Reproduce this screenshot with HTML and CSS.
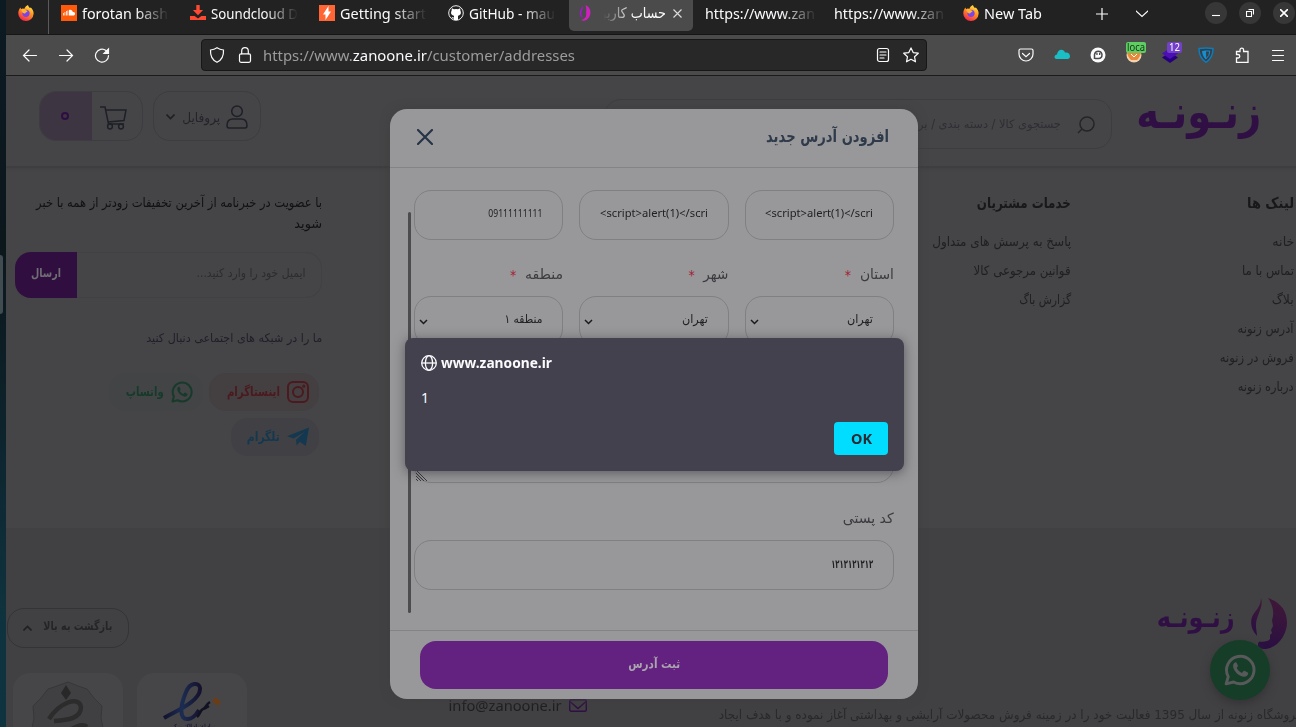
FILE: index.html
```html
<!DOCTYPE html>
<html lang="fa">
<head>
<meta charset="utf-8">
<title>حساب کاربری</title>
<link rel="stylesheet" href="styles.css">
</head>
<body>
<svg class="defs" width="0" height="0">
  <defs>
    <linearGradient id="fx" x1="0.8" y1="0" x2="0.3" y2="1"><stop offset="0" stop-color="#fff04a"/><stop offset=".45" stop-color="#ff9320"/><stop offset="1" stop-color="#f5224f"/></linearGradient>
    <linearGradient id="face" x1="0.6" y1="0" x2="0.4" y2="1"><stop offset="0" stop-color="#3f1838"/><stop offset="1" stop-color="#2a0f42"/></linearGradient>
    <linearGradient id="seal" x1="0" y1="0" x2="1" y2="0"><stop offset="0" stop-color="#12122e"/><stop offset=".5" stop-color="#1c2c52"/><stop offset="1" stop-color="#15122e"/></linearGradient>
    <symbol id="firefox" viewBox="0 0 16 16"><path fill="url(#fx)" d="M10 0c.3 1.800 1.200 2.200 2 3l.8-.6c1.800 1.700 3 4 2.800 6.400A7.600 7.600 0 0 1 8 16 7.600 7.600 0 0 1 .3 8.200C.3 5.800 1.300 3.600 2.600 2.400c0 .8.3 1.400.7 1.800.9-.4 2-.5 2.900-.2C7 2.200 8.200.8 10 0z"/><circle cx="8" cy="8.300" r="3.600" fill="#7a45e8"/><path fill="#ffb22e" d="M3.300 4.200c1.700-.7 3.300-.3 4.700 1 .9.600 1.700.4 1.500 1.100-.3 1-2 .8-2.300 2.200C5.500 8.800 3.300 7 3.300 4.200z"/></symbol>
    <symbol id="whatsapp" viewBox="0 0 24 24"><path fill="none" stroke="currentColor" stroke-width="2.200" stroke-linejoin="round" d="M1.600 22.400 3.200 17A10.300 10.300 0 1 1 7.200 21z"/><path fill="currentColor" d="M8.300 6.300c.5-.2 1-.1 1.200.4l.9 2c.1.400 0 .7-.9 1.800.9 1.700 2.200 2.900 4 3.700l1.200-1.400c.3-.3.6-.3.9-.1l2.200 1.100c.4.200.4.500.3 1-.3 1.400-1.500 2.300-3 2.300-3.600-.2-8-4.200-8.300-8-.1-1.300.7-2.500 1.500-2.800z"/></symbol>
  </defs>
</svg>
<div class="screen">
  <div class="desk"><i class="dock"></i></div>
  <div class="window">
    <div class="tabs">
      <div class="pinned"><svg width="16" height="16"><use href="#firefox"/></svg></div>
      <div class="tab"><svg width="16" height="16" viewBox="0 0 16 16"><rect width="16" height="16" fill="#ff5a0a"/><path fill="#fff" d="M2 8h.8v2.500H2zM3.500 7h.8v3.500h-.8zM5 6h.8v4.500H5zM6.500 5.500h.8v5h-.8zM8 5c2-.8 3.600.4 3.800 2 1.300-.3 2.300.5 2.300 1.700s-.9 1.800-1.800 1.800H8z"/></svg><span class="tl"><b class="fit" data-w="86">forotan bash</b></span></div>
      <div class="tab"><svg width="16" height="16" viewBox="0 0 16 16"><path fill="#ff4a33" d="M6.300 0h3.400v5h3.400L8 10.300 2.900 5h3.400zM0 11h4.600L8 13.500 11.400 11H16v4H0z"/></svg><span class="tl"><b class="fit" data-w="87">Soundcloud D</b></span></div>
      <div class="tab"><svg width="16" height="16" viewBox="0 0 16 16"><rect width="16" height="16" fill="#ff6633"/><path fill="#fff" d="M9.500 1v5.500H12L6.500 15v-5.500H4z"/></svg><span class="tl"><b class="fit" data-w="86">Getting start</b></span></div>
      <div class="tab"><svg width="16" height="16" viewBox="0 0 16 16"><circle cx="8" cy="8" r="7.300" fill="#222" stroke="#eee"/><path fill="#fff" d="M3.800 3.300 6 4.200q2-.4 4 0l2.200-.9.200 2.500c1.200 2 .3 4.700-2.400 5V15H6v-1.600c-1.500.2-2-.8-2.500-1.500 1 0 1.500.8 2.500.6v-1.700C3.300 10.500 2.400 7.800 3.600 5.800z"/></svg><span class="tl"><b class="fit" data-w="86">GitHub - mau</b></span></div>
      <div class="tab active"><svg width="13" height="16" viewBox="0 0 13 16"><path fill="#d020c0" d="M6.500 0C12 2 13.500 10 8 14.500 6 16 3.500 16 2 15c4-1 5.500-3 5.200-6C7 6 8 4 6.500 0z"/><path fill="#a018c8" d="M4 1c.5 3-2 5-1.500 9L4 13C0 12-.8 6 4 1z"/></svg><span class="tl fa"><b class="fit" data-w="66">حساب کاربر</b></span><svg class="x" width="9" height="9" viewBox="0 0 9 9"><path d="m.5.5 8 8m0-8-8 8"/></svg></div>
      <div class="tab"><span class="tl wide"><b class="fit" data-w="110">https://www.zan</b></span></div>
      <div class="tab"><span class="tl wide"><b class="fit" data-w="110">https://www.zan</b></span></div>
      <div class="tab last"><svg width="16" height="16"><use href="#firefox"/></svg><b class="fit" data-w="58">New Tab</b></div>
      <div class="tabend">
        <svg class="ln" width="12" height="12" viewBox="0 0 12 12"><path d="M6 0v12M0 6h12"/></svg>
        <svg class="ln" width="12" height="8" viewBox="0 0 12 8"><path d="m0 1 6 5.500L12 1"/></svg>
      </div>
      <div class="wbtns">
        <i><svg width="8" height="8" viewBox="0 0 8 8"><path d="M0 6.500h8"/></svg></i>
        <i><svg width="8" height="8" viewBox="0 0 8 8"><path d="M.5 2.500h5v5h-5zM2.500.5h5v5"/></svg></i>
        <i><svg width="8" height="8" viewBox="0 0 8 8"><path stroke-width="1.600" d="m0 0 8 8m0-8-8 8"/></svg></i>
      </div>
    </div>
    <div class="toolbar">
      <svg class="ln" width="16" height="16" viewBox="0 0 16 16"><path d="M14.500 8.500h-13m5.500-5.500L1.500 8.500 7 14"/></svg>
      <svg class="ln" width="16" height="16" viewBox="0 0 16 16"><path d="M1.500 8.500h13M9 3l5.500 5.500L9 14"/></svg>
      <svg class="ln" width="16" height="16" viewBox="0 0 16 16"><path d="M14.500 8.500A6.500 6.500 0 1 1 12 3.500l2 2"/><path fill="#fbfbfe" d="M14.500 2v4.500H10z"/></svg>
      <div class="urlbar">
        <svg class="ln" width="16" height="16" viewBox="0 0 16 16"><path d="M8 .8c2 1.400 4 2 6.500 2.200C14.800 8.500 13 13 8 15.300 3 13 1.200 8.500 1.500 3 4 2.800 6 2.200 8 .8z"/></svg>
        <svg class="ln" width="16" height="16" viewBox="0 0 16 16"><rect x="2.500" y="6.800" width="11" height="8.500" rx="1.500"/><path d="M4.700 6.800V4a3.300 3.300 0 0 1 6.600 0v2.800"/></svg>
        <span class="url"><b class="fit" data-w="312">https://www.<em>zanoone.ir</em>/customer/addresses</b></span>
        <svg class="ln" width="16" height="16" viewBox="0 0 16 16"><rect x="2.500" y="1.500" width="11" height="13" rx="2"/><path d="M5 5h6M5 8h6M5 11h4"/></svg>
        <svg class="ln" width="16" height="16" viewBox="0 0 16 16"><path stroke-linejoin="round" d="m8 .9 2.200 4.700 5.100.6-3.800 3.500 1 5.100L8 12.300l-4.500 2.500 1-5.100L.7 6.200l5.100-.6z"/></svg>
      </div>
      <div class="exts">
        <svg class="ln" width="16" height="16" viewBox="0 0 16 16"><path d="M2.500 2h11Q15 2 15 3.500V7A7 7 0 0 1 1 7V3.500Q1 2 2.500 2zM4.500 6.500 8 9.700l3.500-3.200"/></svg>
        <svg width="16" height="16" viewBox="0 0 16 16"><path fill="#19bfc5" d="M2.500 12C-.5 11.500 0 8 3 7.500 3.500 2 9.500 1 11 5.500c3.500-.5 5 1.500 5 3.800 0 1.700-1 2.700-2.500 2.700z"/></svg>
        <svg width="16" height="16" viewBox="0 0 16 16"><circle cx="8" cy="8" r="7.500" fill="#fbfbfe"/><path fill="none" stroke="#4a4a4a" stroke-width="1.500" d="M4.500 12V7.500a3.800 3.800 0 0 1 7.500 0c0 2.500-1 4-3.500 4H5"/><path fill="#4a4a4a" d="M6.300 6h1.300v2H6.300zM9 6h1.300v2H9z"/></svg>
        <span class="badged"><svg width="16" height="16" viewBox="0 0 16 16"><circle cx="8" cy="8" r="7.500" fill="#f1d3b0"/><path fill="#e8893a" d="M1 6h14c-1 3-2 5-4 7H5C3 11 2 9 1 6z"/><path stroke="#fff" d="m5 7 3 3 3-3" fill="none"/></svg><i class="g"><b class="fit" data-w="18">loca</b></i></span>
        <span class="badged"><svg width="16" height="16" viewBox="0 0 16 16"><path fill="#25007a" d="m8 5 8 5.500L8 16l-8-5.500z"/><path fill="#4b0fb5" d="m8 1 8 5.500L8 12 0 6.500z"/></svg><i class="p"><b class="fit" data-w="11">12</b></i></span>
        <svg width="16" height="16" viewBox="0 0 16 16"><path fill="#343f49" stroke="#0b7dbb" stroke-width="1.500" d="M1 1.500q7-1 14 0Q15 11 8 15.300 1 11 1 1.500z"/><path fill="#1590d4" d="M7.800 3.500v9Q4.500 9.500 4 4z"/><path fill="none" stroke="#1590d4" d="M7.500 4h4.300q0 5-4 8z"/></svg>
        <svg class="ln" width="16" height="16" viewBox="0 0 16 16"><path stroke-width="1.300" d="M2.500 15.300V11H4a1.500 1.500 0 0 0 0-3.500H2.500v-3H6V3a1.800 1.800 0 0 1 3.600 0v1.500h4.400v10.800z"/></svg>
        <svg class="ln" width="16" height="16" viewBox="0 0 16 16"><path d="M2.500 3.500h11M2.500 8.500h11M2.500 13.500h11"/></svg>
      </div>
    </div>

    <div class="page" dir="rtl">
      <header class="top">
        <div class="brand"><b class="fit" data-w="125">زنـونـه</b></div>
        <div class="search"><svg width="18" height="18" viewBox="0 0 18 18"><circle cx="10" cy="8" r="7"/><path d="m5 13-4 4"/></svg><b class="fit" data-w="152">جستجوی کالا / دسته بندی / برند</b></div>
        <div class="profile"><svg width="22" height="24" viewBox="0 0 22 24"><circle cx="11" cy="6.300" r="5.300"/><path d="M1 20.500c0-4.500 2-6.500 6-6.500h8c4 0 6 2 6 6.500 0 1.500-.5 2.500-2 2.500H3c-1.500 0-2-1-2-2.500z"/></svg><b class="fit" data-w="38">پروفایل</b><svg class="chev" width="9" height="6" viewBox="0 0 9 6"><path d="m.5.5 4 4 4-4"/></svg></div>
        <div class="cart"><div><svg width="27" height="24" viewBox="0 0 27 24"><path d="M0 1h5l3.500 17H24M6 4h20l-2 10.500L8 16"/><circle cx="10" cy="20.500" r="2.400"/><circle cx="21" cy="20.500" r="2.400"/></svg></div><span><u></u></span></div>
      </header>

      <section class="links">
        <nav class="c1"><h4><b class="fit" data-w="47">لینک ها</b></h4>
          <a><b class="fit" data-w="22">خانه</b></a><a><b class="fit" data-w="52">تماس با ما</b></a><a><b class="fit" data-w="22">بلاگ</b></a><a><b class="fit" data-w="56">آدرس زنونه</b></a><a><b class="fit" data-w="74">فروش در زنونه</b></a><a><b class="fit" data-w="56">درباره زنونه</b></a></nav>
        <nav class="c2"><h4><b class="fit" data-w="94">خدمات مشتریان</b></h4>
          <a><b class="fit" data-w="139">پاسخ به پرسش های متداول</b></a><a><b class="fit" data-w="97">قوانین مرجوعی کالا</b></a><a><b class="fit" data-w="52">گزارش باگ</b></a></nav>
        <div class="news">
          <p><b class="fit" data-w="286">با عضویت در خبرنامه از آخرین تخفیفات زودتر از همه با خبر</b></p>
          <p><b class="fit" data-w="28">شوید</b></p>
          <div class="mail"><span><b class="fit" data-w="109">ایمیل خود را وارد کنید...</b></span><button><b class="fit" data-w="30">ارسال</b></button></div>
          <p class="follow"><b class="fit" data-w="176">ما را در شبکه های اجتماعی دنبال کنید</b></p>
          <div class="social">
            <a class="ig"><svg width="22" height="22" viewBox="0 0 22 22" fill="none" stroke="currentColor" stroke-width="2"><rect x="1" y="1" width="20" height="20" rx="5"/><circle cx="11" cy="11" r="5"/><circle cx="16.800" cy="5.200" r=".6"/></svg><b class="fit" data-w="53">اینستاگرام</b></a>
            <a class="wa"><svg width="22" height="22"><use href="#whatsapp"/></svg><b class="fit" data-w="38">واتساپ</b></a>
            <a class="tg"><svg width="22" height="20" viewBox="0 0 22 20"><path fill="currentColor" d="M22 .5 18.800 19l-6-4.200-3.200 3.700-.5-5.800L17.500 5 6.500 11.500 0 9.300z"/></svg><b class="fit" data-w="33">تلگرام</b></a>
          </div>
        </div>
      </section>

      <footer class="foot">
        <div class="row">
          <div class="flogo"><svg width="36" height="51" viewBox="0 0 36 51"><path fill="url(#face)" d="M17 0c14 5 19 14 19 25S27 51 13 51c-3 0-6-2-6-3.500 0-2 0-3 1.500-4 4 .5 9 0 10.500-2.500v-4l2-2-1-3 2-4-1-6c3-8 0-16-4-22z"/><path fill="url(#face)" d="M10 0c3 10-5 17-5 27 0 5 1 7 1 11-8-9-7-18-2-24 4-5 6-9 6-14z"/></svg><b class="fit" data-w="78">زنـونـه</b></div>
          <div class="totop"><b class="fit" data-w="69">بازگشت به بالا</b><svg width="9" height="6" viewBox="0 0 9 6"><path d="m.5 5.500 4-4 4 4"/></svg></div>
        </div>
        <div class="row2">
          <p><b class="fit" data-w="583">فروشگاه زنونه از سال 1395 فعالیت خود را در زمینه فروش محصولات آرایشی و بهداشتی آغاز نموده و با هدف ایجاد</b></p>
          <div class="email"><svg width="18" height="13" viewBox="0 0 18 13"><rect x=".7" y=".7" width="16.600" height="11.600" rx="1.500"/><path d="m1 2.500 8 7 8-7"/></svg><b class="fit" data-w="113" dir="ltr">info@zanoone.ir</b></div>
          <div class="seals">
            <div class="seal"><svg width="58" height="42" viewBox="0 0 58 42"><path fill="none" stroke="url(#seal)" stroke-width="4" d="M1 37C13 30 38 20 37 7c-1-6-10-6-14 4-6 14-7 28 2 27 5 0 8-4 11-9"/><path stroke="#111122" stroke-width="2.500" fill="none" d="M34 36c3-2 3-7 6-8s2-4 7-7M41 28l5-3"/><path fill="#6b3c18" d="m49 20 4-4 5 5-3 4z"/></svg><b class="fit" data-w="45">نماد اعتماد الکترونیکی</b></div>
            <div class="seal"><svg width="76" height="60" viewBox="0 0 76 60"><path fill="#404042" stroke="#373738" d="m38 1 10 4 9 3 7 9 8 8-1 12 2 10-7 9H9L2 47l2-10-1-12 8-8 7-9 9-3z"/><path fill="#282829" d="m36 4 5 8-5 7-5-7z"/><path fill="none" stroke="#2c2c2d" stroke-width="4.500" d="M19 38c10-16 30-24 32-12 0 12-14 13-27 14M28 56c8-4 22-16 29-10"/></svg></div>
          </div>
        </div>
      </footer>

      <div class="chat"><svg width="32" height="32"><use href="#whatsapp"/></svg></div>

      <div class="modal">
        <div class="mhead"><b class="fit" data-w="123">افزودن آدرس جدید</b><svg width="16" height="16" viewBox="0 0 16 16"><path d="m1 1 14 14m0-14L1 15"/></svg></div>
        <div class="mbody">
          <div class="grid">
            <div class="inp lat"><b class="fit" data-w="108" dir="ltr">&lt;script&gt;alert(1)&lt;/scri</b></div><div class="inp lat"><b class="fit" data-w="108" dir="ltr">&lt;script&gt;alert(1)&lt;/scri</b></div><div class="inp lat"><b class="fit" data-w="54" dir="ltr">09111111111</b></div>
            <label><b class="fit" data-w="34">استان</b><i>*</i></label><label><b class="fit" data-w="25">شهر</b><i>*</i></label><label><b class="fit" data-w="38">منطقه</b><i>*</i></label>
            <div class="inp sel"><b class="fit" data-w="26">تهران</b><svg width="9" height="6" viewBox="0 0 9 6"><path d="m1 1 3.500 3.500L8 1"/></svg></div><div class="inp sel"><b class="fit" data-w="26">تهران</b><svg width="9" height="6" viewBox="0 0 9 6"><path d="m1 1 3.500 3.500L8 1"/></svg></div><div class="inp sel"><b class="fit" data-w="38">منطقه ۱</b><svg width="9" height="6" viewBox="0 0 9 6"><path d="m1 1 3.500 3.500L8 1"/></svg></div>
          </div>
          <div class="area"><svg width="11" height="11" viewBox="0 0 11 11"><path d="m0 0 11 11M0 3l8 8M0 6l5 5M0 9l2 2"/></svg></div>
          <label class="post"><b class="fit" data-w="51">کد پستی</b></label>
          <div class="inp zip"><b class="fit" data-w="42">۱۲۱۲۱۲۱۲۱۲</b></div>
          <i class="bar"></i>
        </div>
        <div class="mfoot"><button><b class="fit" data-w="52">ثبت آدرس</b></button></div>
      </div>

      <div class="alert" dir="ltr">
        <div class="origin"><svg width="16" height="16" viewBox="0 0 16 16"><circle cx="8" cy="8" r="7.300"/><ellipse cx="8" cy="8" rx="3.600" ry="7.300"/><path d="M.7 8h14.600"/></svg><b class="fit" data-w="111">www.zanoone.ir</b></div>
        <div class="msg">1</div>
        <button><b class="fit" data-w="21">OK</b></button>
      </div>
    </div>
  </div>
</div>
<script src="app.js"></script>
</body>
</html>
```
FILE: styles.css
```css
* { box-sizing: border-box; }
body { margin: 0; font-family: "Noto Sans", "DejaVu Sans", sans-serif; overflow: hidden; }
p, h4 { margin: 0; }
b, em, i { font-weight: inherit; font-style: normal; }
svg { display: block; flex: none; }
.defs { position: absolute; }
button { border: 0; padding: 0; font: inherit; color: inherit; display: flex; align-items: center; justify-content: center; }
.fit { display: inline-block; white-space: nowrap; flex: none; }

.screen { width: 1296px; height: 727px; display: flex; overflow: hidden; }
.desk { width: 6px; flex: none; padding-top: 255px; background: linear-gradient(#0c1a22, #0c171c 35%, #0d242d 60%, #0f333e 85%, #10343f); }
.dock { display: block; width: 3px; height: 59px; border-radius: 0 4px 4px 0; background: #414c51; }
.window { width: 1290px; flex: none; display: flex; flex-direction: column; }

/* tab strip */
.tabs { height: 35px; flex: none; background: #222; border-bottom: 1px solid #161616; display: flex; color: #fbfbfe; font-size: 14.5px; }
.pinned { width: 43px; height: 34px; border-right: 1px solid #5a5a5a; padding: 5px 0 0 12px; margin-right: 4px; flex: none; }
.tab { width: 124px; margin-right: 5px; height: 31px; padding: 0 0 5px 8px; display: flex; align-items: center; gap: 5px; flex: none; }
.tab.last { padding-left: 7px; }
.tab.active { background: #4b4b4b; border-radius: 0 0 5px 5px; padding-left: 10px; gap: 8px; }
.tl { width: 87px; overflow: hidden; -webkit-mask-image: linear-gradient(90deg, #000 62%, transparent); mask-image: linear-gradient(90deg, #000 62%, transparent); }
.tl.wide { width: 112px; margin-left: -1px; flex: none; -webkit-mask-image: linear-gradient(90deg, #000 68%, transparent); mask-image: linear-gradient(90deg, #000 68%, transparent); }
.tl.fa { width: 66px; direction: rtl; font-family: "DejaVu Sans", sans-serif; -webkit-mask-image: linear-gradient(270deg, #000 50%, transparent 95%); mask-image: linear-gradient(270deg, #000 50%, transparent 95%); }
.tab .x { margin-left: -1px; stroke: #ddd; stroke-width: 1.1; }
.ln { fill: none; stroke: #fbfbfe; stroke-width: 1.2; stroke-linecap: round; }
.tabend { width: 92px; height: 27px; margin-left: 11px; display: flex; align-items: center; gap: 28px; flex: none; }
.wbtns { display: flex; gap: 12px; padding-top: 2px; margin-left: auto; margin-right: 1px; }
.wbtns i { width: 22px; height: 22px; border-radius: 50%; background: #373737; display: grid; place-items: center; }
.wbtns svg { fill: none; stroke: #fff; stroke-width: 1.1; }

/* address bar */
.toolbar { height: 41px; flex: none; background: #4b4b4b; border-bottom: 1px solid #1b1b1b; display: flex; align-items: center; gap: 20px; padding-left: 16px; }
.urlbar { width: 726px; height: 32px; margin-left: 71px; flex: none; border: 1px solid #171717; border-radius: 4px; background: #282828; display: flex; align-items: center; gap: 12px; padding: 0 7px; }
.url { flex: 1; color: #9c9c9c; font-size: 15px; line-height: 20px; margin: -1px 0 0 -2px; }
.url em { color: #fbfbfe; }
.exts { display: flex; gap: 20px; margin-left: 71px; }
.badged { position: relative; width: 16px; height: 16px; }
.badged i { position: absolute; top: -5px; height: 11px; border-radius: 2px; padding: 0 1px; font-size: 10px; line-height: 11px; }
.badged .g { left: 0; width: 20px; background: #5fce62; color: #14351a; }
.badged .p { left: 5px; width: 15px; background: #7340c8; color: #fff; padding-left: 2px; }

/* shop page */
.page { position: relative; flex: 1; background: #454547; color: #202024; font: 12.5px "DejaVu Sans Condensed", "DejaVu Sans", sans-serif; overflow: hidden; }
.top { height: 92px; border-bottom: 2px solid #3e3e40; display: flex; align-items: flex-start; padding: 15px 35px 0 0; box-shadow: 0 1px 2px #414143; }
.brand { width: 125px; height: 56px; font-weight: bold; font-size: 46px; line-height: 42px; color: #300f44; flex: none; }
.search { width: 508px; height: 50px; margin: 8px 24px 0 0; border: 1px solid #3d3d41; border-radius: 17px; display: flex; align-items: center; gap: 15px; padding-right: 17px; color: #2e2e34; font-size: 11.5px; }
.search svg { fill: none; stroke: #242429; stroke-width: 1.5; margin: 2px -1px 0 1px; }
.profile { width: 108px; height: 50px; margin-right: 343px; border: 1px solid #3d3d41; border-radius: 17px; display: flex; align-items: center; gap: 6px; padding: 2px 12px 0 0; color: #24242b; flex: none; }
.profile svg, .cart svg { fill: none; stroke: #1e2028; stroke-width: 1.5; }
.profile .chev { margin-right: 1px; }
.cart { width: 104px; height: 50px; margin-right: 10px; border: 1px solid #3d3d41; border-radius: 17px; display: flex; overflow: hidden; flex: none; }
.cart div { width: 50px; display: grid; place-items: center; padding: 3px 0 0 0; }
.cart div svg { margin-right: 8px; }
.cart span { width: 52px; background: #3d3542; display: grid; place-items: center; }
.cart u { width: 8px; height: 8px; border: 2px solid #2e0e42; border-radius: 50%; margin-right: 2px; margin-bottom: 1px; }

.links { height: 360px; display: flex; padding: 24px 2px 0 9px; }
.c1 { width: 223px; flex: none; }
.c2 { width: 749px; flex: none; }
.links h4 { height: 21px; line-height: 23px; font-size: 15px; margin-bottom: 14px; color: #18181b; }
.links a { display: block; height: 29px; line-height: 29px; font-size: 13px; }
.news { width: 307px; flex: none; }
.news p { height: 21px; line-height: 21px; font-size: 13px; color: #111114; }
.mail { width: 307px; height: 46px; margin-top: 18px; box-shadow: inset 0 0 0 1px #414143; border-radius: 16px; display: flex; overflow: hidden; color: #2c2c31; font-size: 12px; }
.mail span { flex: 1; padding-right: 17px; line-height: 43px; }
.mail button { width: 62px; background: #300f40; color: #706e74; font-weight: bold; padding-bottom: 4px; }
.news .follow { margin-top: 30px; color: #1f1f29; font-size: 12px; }
.social { display: flex; flex-wrap: wrap; gap: 7px 6px; padding: 0 3px; margin-top: 24px; font-weight: bold; }
.links .social a { height: 38px; border-radius: 17px; display: flex; align-items: center; padding-right: 10px; gap: 7px; }
.links .social .fit { margin-bottom: 2px; }
.links .social .ig { width: 110px; background: #443f41; color: #4b191e; }
.links .social .wa { width: 94px; background: #424446; color: #173a2b; }
.links .social .tg { width: 88px; background: #414145; color: #14384f; }

.foot { height: 200px; background: #414143; color: #252528; }
.row { display: flex; justify-content: space-between; padding: 70px 9px 0 1px; height: 145px; }
.flogo { display: flex; gap: 16px; font-weight: bold; font-size: 29px; line-height: 38px; color: #300f44; }
.totop { width: 122px; height: 40px; margin-top: 10px; border: 1px solid #343436; border-radius: 17px; display: flex; align-items: center; gap: 11px; padding: 0 16px 4px 0; font-weight: bold; font-size: 12px; }
.totop svg { margin-top: 4px; }
.totop svg, .profile .chev { fill: none; stroke: #202024; stroke-width: 1.6; }
.row2 { display: flex; }
.row2 p { width: 583px; margin-right: -6px; padding-top: 34px; font-size: 12.5px; color: #29292c; flex: none; }
.email { width: 138px; height: 20px; margin: 22px 132px 0 0; display: flex; align-items: center; gap: 7px; font: 15px "Noto Sans", sans-serif; color: #1e1e21; flex: none; }
.email svg { fill: none; stroke: #300f44; stroke-width: 1.4; }
.seals { display: flex; gap: 14px; margin-right: auto; padding-left: 7px; flex: none; }
.seal { width: 110px; height: 110px; border-radius: 17px; background: #464648; display: flex; flex-direction: column; align-items: center; padding-top: 8px; font-size: 7px; font-weight: bold; color: #1c1438; }

.chat { position: absolute; left: 1204px; top: 564px; width: 60px; height: 60px; border-radius: 50%; background: #163d27; color: #58595b; display: grid; place-items: center; box-shadow: 0 4px 8px #343436; }

/* address form */
.modal { position: absolute; left: 384px; top: 33px; width: 528px; height: 590px; border-radius: 17px; background: #98989a; color: #3b3b40; box-shadow: 0 0 10px #3f3f41; }
.mhead { height: 59px; border-bottom: 1px solid #848486; display: flex; align-items: center; justify-content: space-between; padding: 0 29px 3px 27px; font-weight: bold; font-size: 16.5px; color: #2f3a4a; }
.mhead svg { fill: none; stroke: #263448; stroke-width: 2.2; stroke-linecap: round; }
.mbody { position: relative; height: 462px; padding: 22px 24px 0; }
.grid { display: grid; grid-template-columns: repeat(3, 1fr); column-gap: 16px; }
.inp { height: 50px; border: 1px solid #808083; border-radius: 17px; display: flex; align-items: center; padding: 0 20px 4px 4px; color: #212125; font-size: 12px; }
.lat { font: 11.5px "Noto Sans", sans-serif; padding-bottom: 5px; }
.zip { font-weight: bold; font-size: 11.5px; padding-bottom: 2px; }
.sel { justify-content: space-between; }
.sel svg { fill: none; stroke: #1a1a1e; stroke-width: 1.5; margin-top: 5px; }
.mbody label { height: 56px; display: flex; align-items: center; gap: 9px; padding-top: 12px; font-size: 14px; }
.mbody label i { color: #a51d35; font-size: 14px; line-height: 12px; height: 10px; }
.area { height: 120px; margin-top: 17px; border: 1px solid #808083; border-radius: 17px; display: flex; align-items: flex-end; justify-content: flex-end; padding: 0 0 1px 1px; }
.area svg { stroke: #3c3c3f; stroke-width: 1; }
.mbody .post { height: 57px; padding-top: 13px; }
.bar { position: absolute; left: 18px; top: 44px; width: 3px; height: 401px; border-radius: 2px; background: #4c4c4f; }
.mfoot { border-top: 1px solid #848486; padding: 10px 30px 0; }
.mfoot button { width: 468px; height: 48px; border-radius: 16px; background: #632280; color: #aaa5ae; font-weight: bold; font-size: 12.5px; padding-bottom: 4px; }

/* script dialog */
.alert { position: absolute; left: 399px; top: 262px; width: 499px; height: 133px; border-radius: 8px; background: #42414d; box-shadow: 0 2px 12px rgba(30,30,40,.5); color: #fbfbfe; font: 14px "Noto Sans", sans-serif; padding: 16px; display: flex; flex-direction: column; }
.origin { height: 18px; display: flex; align-items: center; gap: 4px; font-weight: bold; }
.origin .fit { margin-bottom: 2px; }
.origin svg { fill: none; stroke: #fbfbfe; stroke-width: 1.3; }
.msg { height: 20px; line-height: 20px; margin-top: 16px; }
.alert button { width: 54px; height: 33px; margin: 14px 0 0 auto; border-radius: 4px; background: #00ddff; color: #2b2a33; font-weight: bold; }
```
FILE: app.js
```js
// Scale each label horizontally so that it takes exactly its data-w width.
document.querySelectorAll('.fit').forEach(function (el) {
  var target = Number(el.dataset.w);
  var natural = el.getBoundingClientRect().width;
  var rtl = getComputedStyle(el.parentElement).direction === 'rtl';
  el.style.transformOrigin = rtl ? 'right center' : 'left center';
  el.style.transform = 'scaleX(' + target / natural + ')';
  el.style[rtl ? 'marginLeft' : 'marginRight'] = target - natural + 'px';
});
```
